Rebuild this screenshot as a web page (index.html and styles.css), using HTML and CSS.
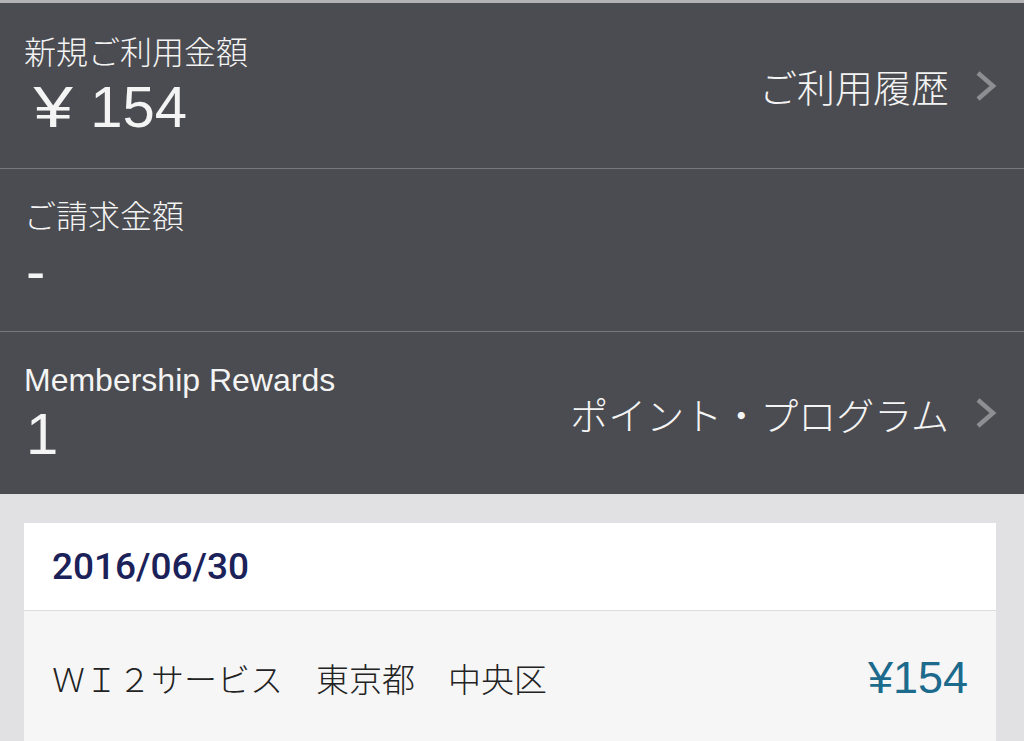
FILE: index.html
```html
<!DOCTYPE html>
<html lang="ja">
<head>
 <meta charset="UTF-8">
 <meta name="viewport" content="width=device-width, initial-scale=1.0">
 <title>ご利用状況</title>
 <link rel="stylesheet" href="styles.css">
</head>
<body>
 <div class="summary">
 <div class="row">
 <div class="info">
 <div class="label">新規ご利用金額</div>
 <div class="value"><span class="yen">¥</span>154</div>
 </div>
 <a class="link" href="#">
 ご利用履歴
 <svg class="chevron" viewBox="0 0 22 32" width="22" height="32"><path d="M3 3 L18 16 L3 29"/></svg>
 </a>
 </div>

 <div class="row">
 <div class="info">
 <div class="label">ご請求金額</div>
 <div class="value">-</div>
 </div>
 </div>

 <div class="row">
 <div class="info">
 <div class="label latin">Membership Rewards</div>
 <div class="value">1</div>
 </div>
 <a class="link" href="#">
 ポイント・プログラム
 <svg class="chevron" viewBox="0 0 22 32" width="22" height="32"><path d="M3 3 L18 16 L3 29"/></svg>
 </a>
 </div>
 </div>

 <div class="history">
 <div class="card">
 <div class="date">2016/06/30</div>
 <div class="item">
 <span class="merchant">ＷＩ２サービス　東京都　中央区</span>
 <span class="amount">¥154</span>
 </div>
 </div>
 </div>
</body>
</html>
```

FILE: styles.css
```css
body {
margin: 0;
font-family: "Liberation Sans", "Noto Sans CJK JP", sans-serif;
background-color: #e1e1e3;
height: 741px;
overflow: hidden;
}
.summary {
background: #4b4c51;
border-top: 3px solid #b3b3b6;
color: #f4f4f4;
}
.row {
height: 162px;
display: flex;
align-items: center;
justify-content: space-between;
padding: 0 27px 0 24px;
border-bottom: 1px solid #77787c;
font-weight: 300;
}
.row:first-child {
height: 165px;
}
.row:last-child {
border-bottom: none;
}
.label {
font-size: 32px;
line-height: 36px;
}
.label.latin {
font-weight: 400;
}
.value {
font-size: 58px;
line-height: 60px;
margin-top: 6px;
padding-left: 2px;
font-weight: 400;
}
.yen {
display: inline-block;
margin: 0 21px 0 11px;
transform: scaleX(1.22);
}
.link {
display: flex;
align-items: center;
gap: 26px;
color: #f4f4f4;
text-decoration: none;
font-size: 38px;
}
.chevron {
fill: none;
stroke: #8d8e92;
stroke-width: 4.5;
}
.history {
padding: 29px 28px 0 24px;
}
.card {
background: #f6f6f6;
}
.date {
background: #fff;
height: 87px;
display: flex;
align-items: center;
padding-left: 28px;
font-family: Roboto, "Liberation Sans", sans-serif;
font-weight: 500;
font-size: 37px;
color: #1b2159;
border-bottom: 1px solid #dcdcdc;
}
.item {
display: flex;
justify-content: space-between;
align-items: center;
padding: 41px 28px 60px 28px;
}
.merchant {
font-size: 33px;
font-weight: 300;
color: #222;
}
.amount {
font-size: 45px;
color: #1c6a8c;
}
```
